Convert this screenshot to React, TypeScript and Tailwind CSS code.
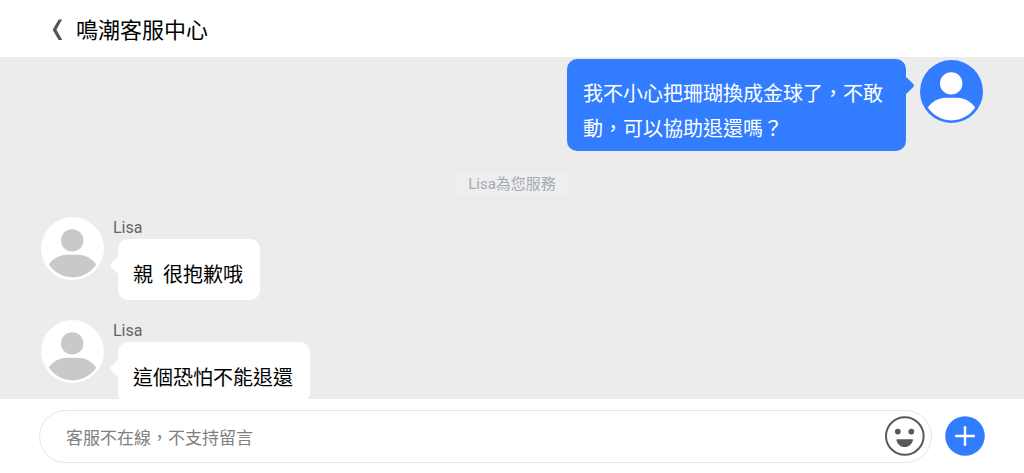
import React from "react";

const FONT = "font-[Roboto,'Noto_Sans_CJK_TC',sans-serif]";

function PersonAvatar({ tone }: { tone: "customer" | "agent" }) {
  const disc = tone === "customer" ? "fill-[#327dff]" : "fill-white";
  const figure = tone === "customer" ? "fill-white" : "fill-[#c9c9c9]";
  return (
    <svg viewBox="0 0 63 63" className="size-[63px] shrink-0" aria-hidden="true">
      <circle cx="31.5" cy="31.5" r="31.5" className={disc} />
      <circle cx="31.2" cy="23.4" r="11.2" className={figure} />
      <path
        d="M7.8 47.6C12.5 41.2 18.8 37.8 25.5 37.8H37.5C44.2 37.8 50.5 41.2 55.2 47.6C50 55.5 41.5 60.4 31.5 60.4C21.5 60.4 13 55.5 7.8 47.6Z"
        className={figure}
      />
    </svg>
  );
}

function AgentMessage({ name, text }: { name: string; text: string }) {
  return (
    <article className="flex items-start">
      <PersonAvatar tone="agent" />
      <div className="ml-[9px]">
        <p className="h-[22px] text-[16px] leading-[22px] text-[#666666]">{name}</p>
        <div className="relative ml-[5px] w-fit rounded-[10px] bg-white pt-[19px] pr-[17px] pb-[7px] pl-[15px]">
          <span className="absolute top-[20px] -left-[6px] size-[13px] rotate-45 rounded-[2px] bg-white" />
          <p className="relative text-[20px] leading-[35px] whitespace-pre text-black">{text}</p>
        </div>
      </div>
    </article>
  );
}

export default function App() {
  return (
    <div className={`flex h-screen flex-col bg-white ${FONT}`}>
      <header className="flex h-[57px] shrink-0 items-center pt-[2px] pl-[52px]">
        <button type="button" aria-label="返回" className="mr-[14px]">
          <svg viewBox="0 0 10 22" className="h-[22px] w-[10px]" aria-hidden="true">
            <path d="M6.6 0.5H10.2L4.4 10.7L10.2 20.9H6.6L0.7 10.7Z" className="fill-[#555555]" />
          </svg>
        </button>
        <h1 className="pt-[2px] text-[22px] leading-8 text-black">鳴潮客服中心</h1>
      </header>

      <main className="min-h-0 flex-1 overflow-hidden bg-[#ececec] px-[41px] pt-[2px]">
        <article className="flex items-start justify-end">
          <div className="relative w-[339px] rounded-[10px] bg-[#327dff] px-4 pt-[18px] pb-[4px]">
            <span className="absolute top-[20px] -right-[6px] size-[13px] rotate-45 rounded-[2px] bg-[#327dff]" />
            <p className="relative text-[20px] leading-[35px] text-white">
              我不小心把珊瑚換成金球了，不敢動，可以協助退還嗎？
            </p>
          </div>
          <div className="mt-px ml-[14px]">
            <PersonAvatar tone="customer" />
          </div>
        </article>

        <p className="mx-auto mt-5 w-fit rounded-[4px] bg-[#eeeeee] px-3 text-[15px] leading-[26px] text-[#a3abb3]">
          Lisa為您服務
        </p>

        <section className="mt-5 flex flex-col gap-5">
          <AgentMessage name="Lisa" text={"親  很抱歉哦"} />
          <AgentMessage name="Lisa" text="這個恐怕不能退還" />
        </section>
      </main>

      <footer className="flex h-[74px] shrink-0 items-center gap-[13px] px-[39px]">
        <div className="flex h-[53px] flex-1 items-center rounded-full border border-[#e6e6e6] pr-[6px] pl-[26px]">
          <input
            type="text"
            aria-label="訊息"
            placeholder="客服不在線，不支持留言"
            className="min-w-0 flex-1 bg-transparent pt-[3px] text-[17px] leading-6 text-black outline-none placeholder:text-[#808080]"
          />
          <button type="button" aria-label="表情" className="shrink-0">
            <svg viewBox="0 0 40 40" className="size-10" aria-hidden="true">
              <circle cx="19.8" cy="20" r="18.8" className="fill-none stroke-[#595959]" strokeWidth="2" />
              <circle cx="12.8" cy="15.6" r="2.9" className="fill-[#595959]" />
              <circle cx="26.3" cy="15.6" r="2.9" className="fill-[#595959]" />
              <path
                d="M12 23.2H27.4Q28.2 23.2 28 24C27 28.300 24 31 19.700 31C15.400 31 12.400 28.300 11.400 24Q11.200 23.200 12 23.200Z"
                className="fill-[#595959]"
              />
            </svg>
          </button>
        </div>
        <button type="button" aria-label="更多" className="shrink-0">
          <svg viewBox="0 0 40 40" className="size-10" aria-hidden="true">
            <circle cx="20" cy="20" r="19.8" className="fill-[#327dff]" />
            <path d="M20 10.200V29.800M10.200 20H29.800" className="stroke-white" strokeWidth="2.4" />
          </svg>
        </button>
      </footer>
    </div>
  );
}
